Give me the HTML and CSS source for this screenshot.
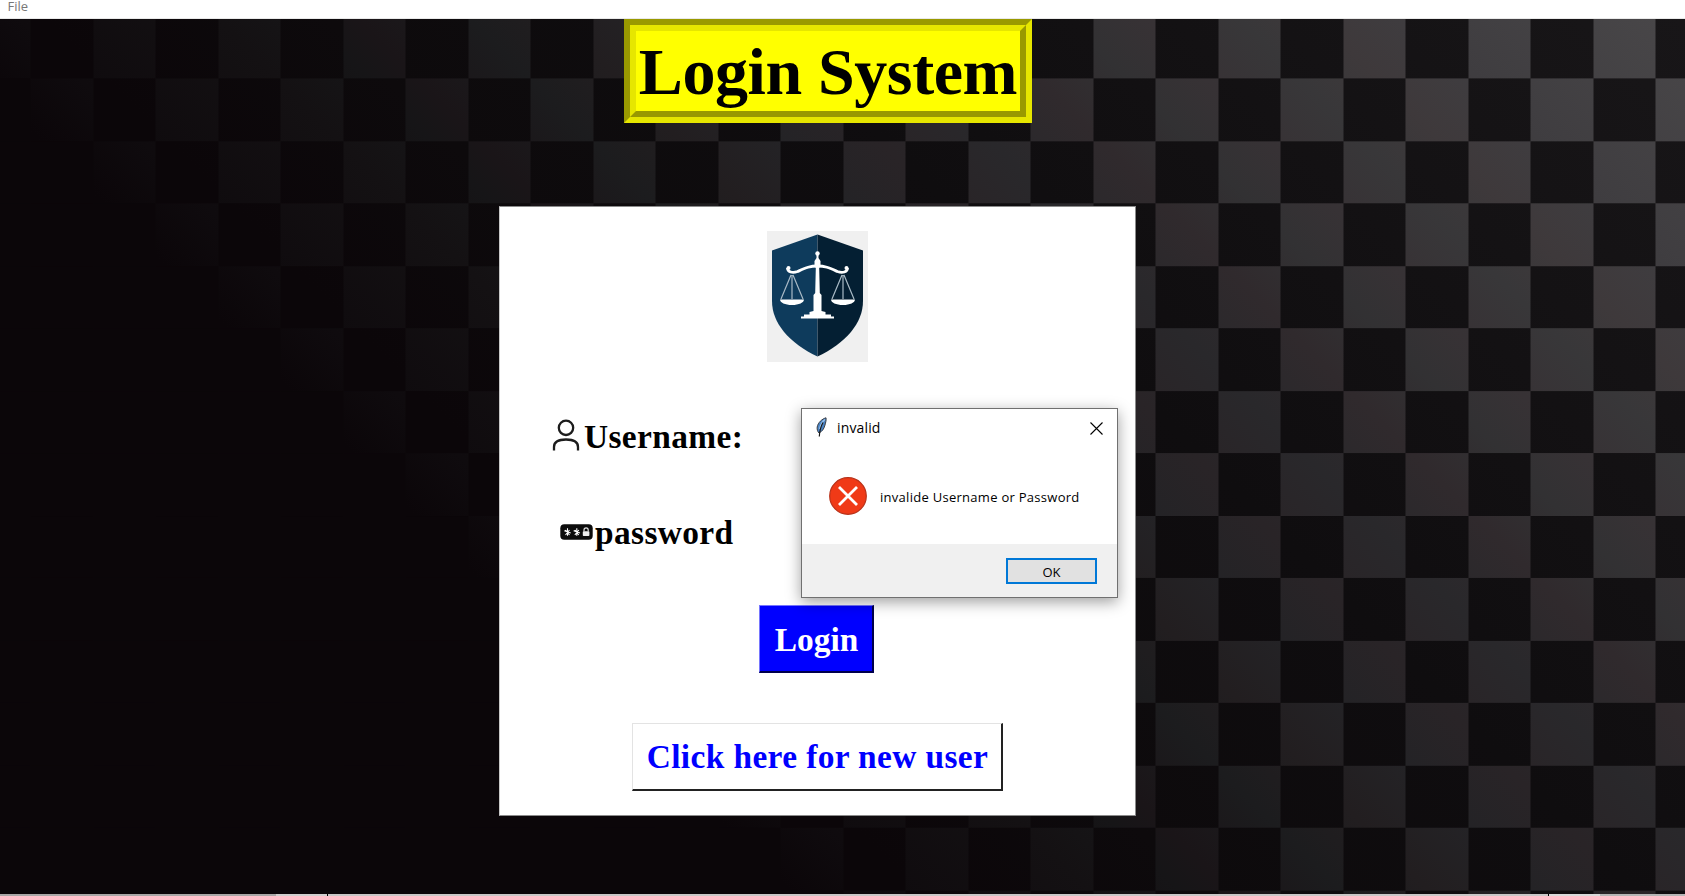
FILE: index.html
```html
<!DOCTYPE html>
<html lang="en">
<head>
<meta charset="utf-8">
<title>Login System</title>
<link rel="stylesheet" href="styles.css">
</head>
<body>
<div class="window">
  <nav class="menubar"><span class="menu-item">File</span></nav>
  <main class="canvas">
    <h1 class="banner"><span class="banner-text">Login System</span></h1>
    <section class="card">
      <div class="logo">
        <svg width="101" height="131" viewBox="0 0 101 131">
          <path d="M50.500 3.500 5 19.500V70C5 92 22 112 50.500 125.500Z" fill="#0e3b5c"/>
          <path d="M50.500 3.500 96 19.500V70C96 92 79 112 50.500 125.500Z" fill="#041f33"/>
          <g fill="#fff">
            <circle cx="50.500" cy="22.500" r="2.200"/>
            <path d="M49.500 23h2v4l2 3v5l-1.300 2 .6 25 1.700 2v16l4 1v2.500h5.500v2h3v2H34v-2h3v-2h5.500V81l4-1V64l1.700-2 .6-25-1.300-2v-5l2-3Z"/>
            <circle cx="21.500" cy="37" r="2"/><circle cx="79.500" cy="37" r="2"/>
            <path d="M13 68.500h24c0 3-5 5.500-12 5.500s-12-2.500-12-5.500ZM64 68.500h24c0 3-5 5.500-12 5.500s-12-2.500-12-5.500Z"/>
          </g>
          <path d="M20.500 37c0 4 5 5.500 10 3.500 8-3.500 12-5.500 20-5.500s12 2 20 5.500c5 2 10 .5 10-3.500" fill="none" stroke="#fff" stroke-width="2.800"/>
          <path d="M24 44 14 68M25 44v24M26 44l10 24M75 44 65 68M76 44v24M77 44l10 24" fill="none" stroke="#a9bac6" stroke-width="1.200"/>
        </svg>
      </div>
      <div class="field field-user">
        <svg width="28" height="32" viewBox="0 0 28 32" fill="none" stroke="#1c1c1c" stroke-width="2.300">
          <circle cx="14" cy="8.800" r="7.200"/>
          <path d="M2 31.500V28c0-5 4-7.500 12-7.500S26 23 26 28v3.500"/>
        </svg>
        <span class="field-label">Username:</span>
      </div>
      <div class="field field-pass">
        <svg width="33" height="16" viewBox="0 0 33 16">
          <rect x=".3" y=".3" width="32.400" height="15.400" rx="4" fill="#0c0c0c"/>
          <path d="M7.500 4.200v7.600M4.300 6.800l6.400 2.200M5.500 11l4-5M9.500 11l-4-5M16.800 4.200v7.600M13.600 6.800l6.400 2.200M14.800 11l4-5M18.800 11l-4-5" stroke="#fff" stroke-width="1.100"/>
          <rect x="22.800" y="7.200" width="6.600" height="4.800" rx=".8" fill="#eee"/>
          <path d="M24 7.500V6a2.100 2.100 0 0 1 4.200 0v1.500" fill="none" stroke="#ddd" stroke-width="1.200"/>
        </svg>
        <span class="field-label">password</span>
      </div>
      <button class="btn btn-login">Login</button>
      <button class="btn btn-new">Click here for new user</button>
    </section>
  </main>
  <footer class="edge"><i class="edge-a"></i><i class="edge-b"></i><i class="edge-c"></i><i class="edge-d"></i><i class="edge-e"></i></footer>

  <div class="dialog" role="alertdialog">
    <header class="dialog-title">
      <svg class="feather" width="14" height="20" viewBox="0 0 14 20">
        <path d="M11 .8C7 2 3 5.500 2.200 10c-.3 2.500.3 4.500 1.800 6 3-1.500 5-4 6-8 .6-2.500 1.500-5 1-7.200Z" fill="#4a83c4" stroke="#3a3d42" stroke-width="1"/>
        <path d="M9.800 2.500C7 5 5.300 8 4.600 12" fill="none" stroke="#9cc4ec" stroke-width="1.300"/>
        <path d="M8 5.500C6 9 4.700 13 4.300 19.500" fill="none" stroke="#181818" stroke-width="1.200"/>
      </svg>
      <span class="dialog-name">invalid</span>
      <svg class="close" width="13" height="13" viewBox="0 0 13 13"><path d="M.5.500l12 12M12.500.500l-12 12" stroke="#000" stroke-width="1.100"/></svg>
    </header>
    <div class="dialog-body">
      <svg width="38" height="38" viewBox="0 0 38 38">
        <circle cx="19" cy="19" r="18.300" fill="#f03a17" stroke="#b8321a" stroke-width="1.200"/>
        <path d="M10 10l18 18M28 10 10 28" stroke="#fff" stroke-width="2.800"/>
      </svg>
      <p class="dialog-msg">invalide Username or Password</p>
    </div>
    <div class="dialog-actions"><button class="ok">OK</button></div>
  </div>
</div>
</body>
</html>
```
FILE: styles.css
```css
* { box-sizing: border-box; }
body { margin: 0; overflow: hidden; }

.window {
  position: relative;
  display: flex;
  flex-direction: column;
  width: 1685px;
  height: 896px;
  font-family: "Liberation Serif", serif;
}

.menubar {
  height: 19px;
  padding-left: 7.500px;
  background: #fff;
  border-bottom: 1px solid #e9e9e9;
  font: 13px/12px "Open Sans", sans-serif;
  color: #777;
}
.menu-item { display: block; }

/* Checkerboard: dark gradient below, light squares masked above it */
.canvas {
  position: relative;
  isolation: isolate;
  height: 875px;
  background: linear-gradient(45deg, #0b0609 0 36%, #0d0a0c 47%, #0f0d0f 64%, #131113 80%, #181618 100%);
}
.canvas::before {
  content: "";
  position: absolute;
  inset: 0;
  z-index: -1;
  background: linear-gradient(45deg, #0b0609 0 31%, #0f0b0e 35%, #141113 42.700%, #161517 46.200%, #1a1518 48.200%, #1c1c1e 52.500%, #221e20 56%, #242326 60%, #292427 63.800%, #29282b 68.100%, #302a2d 72.400%, #323133 75.900%, #373235 79%, #383739 82.600%, #3e393b 85.700%, #3f3d40 89.600%, #494749 100%);
  mask-image:
    linear-gradient(90deg, #000 50%, transparent 50%),
    linear-gradient(#000 50%, transparent 50%);
  mask-size: 125px 100%, 100% 124.900px;
  mask-position: 93.500px 0, 0 59.400px;
  mask-composite: exclude;
}

.banner {
  width: 408px;
  height: 104px;
  margin: 0 0 0 624px;
  border: 6px solid;
  border-color: #999900 #e6e600 #e6e600 #999900;
}
.banner-text {
  display: block;
  height: 92px;
  border: 6px solid;
  border-color: #e6e600 #999900 #999900 #e6e600;
  background: #ff0;
  color: #000;
  font-size: 66px;
  font-weight: bold;
  letter-spacing: -.400px;
  line-height: 82px;
  text-align: center;
  white-space: nowrap;
}

.card {
  display: flex;
  flex-direction: column;
  align-items: center;
  width: 637px;
  height: 610px;
  margin: 83px 0 0 499px;
  padding-top: 24px;
  border: 1px solid #8b8b8b;
  border-left-color: #c8c8c8;
  background: #fff;
}
.logo { width: 101px; height: 131px; background: #f0f0f0; }
.logo svg { display: block; }

.field { display: flex; align-self: flex-start; height: 38px; }
.field-label { font-size: 33.400px; font-weight: bold; letter-spacing: .380px; line-height: 38px; color: #000; }
.field-user { gap: 4px; margin: 56px 0 0 52px; }
.field-user svg { margin-top: 1px; }
.field-pass { gap: 2px; margin: 58px 0 0 60px; }
.field-pass svg { margin-top: 10px; }

.btn {
  height: 68px;
  padding: 0;
  border: 2px solid;
  font: bold 33.400px/66px "Liberation Serif", serif;
  text-align: center;
  white-space: nowrap;
}
.btn-login {
  width: 115px;
  margin: 53px 2px 0 0;
  padding: 1px 0 0 1px;
  background: #0000ff;
  border-color: #7676ff #00004c #00004c #7676ff;
  border-width: 1px 2px 2px 1px;
  color: #fff;
}
.btn-new {
  width: 371px;
  margin-top: 50px;
  padding-left: 1px;
  background: #fff;
  border-color: #e3e3e3 #222 #222 #e3e3e3;
  border-width: 1px 2px 2px 1px;
  color: #0000ff;
  letter-spacing: .390px;
}

.edge { display: flex; height: 2px; }
.edge-a { width: 276px; background: #a9a7a7; }
.edge-b { width: 51px; background: #d0cece; }
.edge-c { width: 1221px; background: #c9c7c7; border-left: 1px solid #000; }
.edge-d { width: 52px; background: #d9d9d9; border-left: 1px solid #000; }
.edge-e { flex: 1; background: #b5b5b5; }

/* Modal error window floating above the form */
.dialog {
  position: absolute;
  left: 801px;
  top: 408px;
  display: flex;
  flex-direction: column;
  width: 317px;
  height: 190px;
  border: 1px solid #707070;
  background: #fff;
  box-shadow: 0 4px 14px rgba(0, 0, 0, .38);
  font-family: "Open Sans", sans-serif;
  color: #000;
}
.dialog-title { display: flex; height: 38px; padding: 8px 14.500px 0 13px; }
.dialog-name { margin-left: 8px; font-size: 14px; letter-spacing: .150px; line-height: 22px; }
.close { margin: 5px 0 0 auto; }
.dialog-body { display: flex; flex: 1; padding: 30px 0 0 27px; }
.dialog-msg { margin: 0 0 0 13px; font-size: 13px; letter-spacing: .280px; line-height: 40px; white-space: nowrap; }
.dialog-actions { display: flex; justify-content: flex-end; height: 53px; padding: 14px 20px 0 0; background: #f0f0f0; }
.ok {
  width: 91px;
  height: 26px;
  padding: 1px 0 0;
  border: 2px solid #0078d7;
  background: #e1e1e1;
  font: 13px/22px "Open Sans", sans-serif;
  color: #000;
}
```
